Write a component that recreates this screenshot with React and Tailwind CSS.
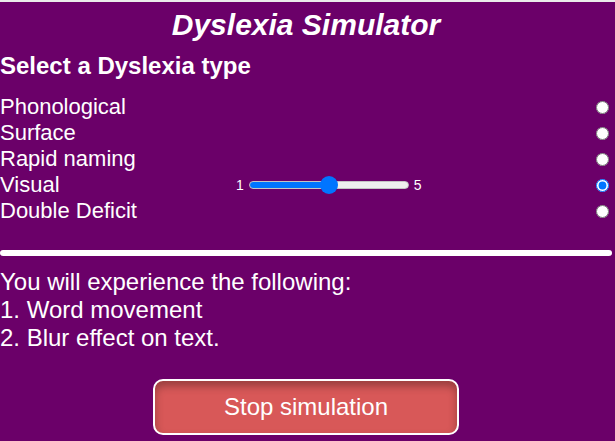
import React, { useState } from 'react';

const types = ['Phonological', 'Surface', 'Rapid naming', 'Visual', 'Double Deficit'];

const App = () => {
  const [selected, setSelected] = useState('Visual');
  const [level, setLevel] = useState(3);

  const fill = ((level - 1) / 4) * 100;

  return (
    <div className="min-h-screen w-full bg-[#6b0069] text-white font-['Liberation_Sans',Arial,sans-serif]">
      <div className="h-[2px] w-full bg-[#ebebeb]" />
      <div className="w-[612px] pt-[6px]">
        <h1 className="text-center text-[30px] leading-[34px] font-bold italic">Dyslexia Simulator</h1>

        <h3 className="mt-[10px] text-[24px] leading-[28px] font-bold">Select a Dyslexia type</h3>

        <div className="mt-[14px] flex flex-col">
          {types.map((type) => (
            <label key={type} className="flex h-[26px] items-center text-[22px] leading-[26px]">
              <span className="w-[236px] shrink-0">{type}</span>
              {type === 'Visual' && selected === 'Visual' && (
                <span className="flex items-center text-[14px]">
                  <span>1</span>
                  <input
                    type="range"
                    min="1"
                    max="5"
                    value={level}
                    onChange={(e) => setLevel(Number(e.target.value))}
                    style={{ background: `linear-gradient(to right, #0075ff ${fill}%, #efefef ${fill}%)` }}
                    className="mx-[5px] h-[8px] w-[160px] appearance-none rounded-full border border-[#c4c4c4] outline-none [&::-webkit-slider-thumb]:h-[18px] [&::-webkit-slider-thumb]:w-[18px] [&::-webkit-slider-thumb]:appearance-none [&::-webkit-slider-thumb]:rounded-full [&::-webkit-slider-thumb]:bg-[#0075ff]"
                  />
                  <span>5</span>
                </span>
              )}
              <input
                type="radio"
                name="dyslexia"
                value={type}
                checked={selected === type}
                onChange={() => setSelected(type)}
                className="ml-auto mr-[3px]"
              />
            </label>
          ))}
        </div>

        <div className="mt-[26px] h-[6px] w-full rounded-full bg-white" />

        <div className="mt-[12px] text-[24px] leading-[28px]">
          <p>You will experience the following:</p>
          <p>1. Word movement</p>
          <p>2. Blur effect on text.</p>
        </div>

        <div className="mt-[27px] flex justify-center">
          <button
            type="button"
            className="h-[56px] w-[306px] rounded-[10px] border-2 border-white bg-[#d85858] text-[24px] text-white shadow-[inset_0_5px_8px_rgba(0,0,0,0.3)]"
          >
            Stop simulation
          </button>
        </div>
      </div>
    </div>
  );
};

export default App;
